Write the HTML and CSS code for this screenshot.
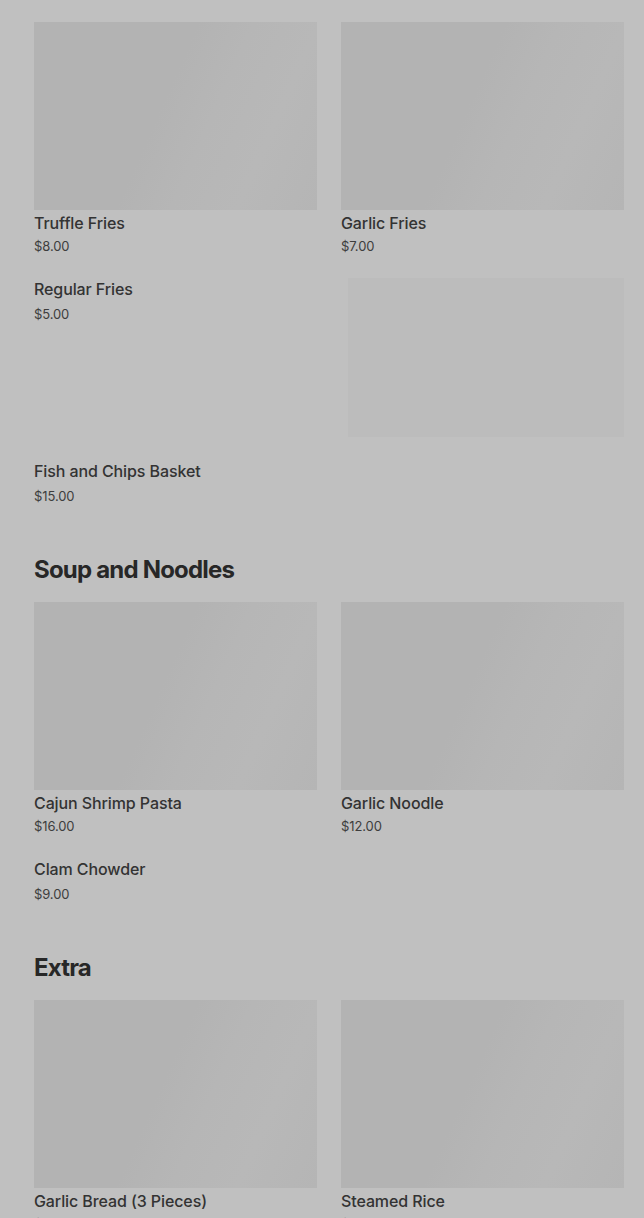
FILE: index.html
```html
<!DOCTYPE html>
<html lang="en">
<head>
<meta charset="utf-8">
<title>Menu</title>
<link rel="stylesheet" href="styles.css">
</head>
<body>
<main class="menu">
  <section class="section first">
    <div class="grid">
      <div class="item">
        <div class="thumb"></div>
        <div class="name">Truffle Fries</div>
        <div class="price">$8.00</div>
      </div>
      <div class="item">
        <div class="thumb"></div>
        <div class="name">Garlic Fries</div>
        <div class="price">$7.00</div>
      </div>
      <div class="item text-only">
        <div class="name">Regular Fries</div>
        <div class="price">$5.00</div>
      </div>
      <div class="item">
        <div class="ghost"></div>
      </div>
      <div class="item text-only">
        <div class="name">Fish and Chips Basket</div>
        <div class="price">$15.00</div>
      </div>
    </div>
  </section>

  <section class="section">
    <h2 class="heading">Soup and Noodles</h2>
    <div class="grid">
      <div class="item">
        <div class="thumb"></div>
        <div class="name">Cajun Shrimp Pasta</div>
        <div class="price">$16.00</div>
      </div>
      <div class="item">
        <div class="thumb"></div>
        <div class="name">Garlic Noodle</div>
        <div class="price">$12.00</div>
      </div>
      <div class="item text-only">
        <div class="name">Clam Chowder</div>
        <div class="price">$9.00</div>
      </div>
    </div>
  </section>

  <section class="section">
    <h2 class="heading">Extra</h2>
    <div class="grid">
      <div class="item">
        <div class="thumb"></div>
        <div class="name">Garlic Bread (3 Pieces)</div>
        <div class="price">$6.00</div>
      </div>
      <div class="item">
        <div class="thumb"></div>
        <div class="name">Steamed Rice</div>
        <div class="price">$3.00</div>
      </div>
    </div>
  </section>
</main>
</body>
</html>
```

FILE: styles.css
```css
html, body {
  margin: 0;
  padding: 0;
  background: #c0c0c0;
  overflow: hidden;
}

body {
  font-family: Inter, "Noto Sans", sans-serif;
  color: #333333;
}

.menu {
  padding: 22px 20px 0 34px;
}

.section + .section {
  margin-top: 48px;
}

.heading {
  margin: 0 0 17px 0;
  padding-top: 1px;
  font-size: 24px;
  line-height: 31px;
  font-weight: 700;
  letter-spacing: -0.8px;
  color: #272727;
}

.grid {
  display: grid;
  grid-template-columns: 1fr 1fr;
  column-gap: 24px;
  row-gap: 23px;
}

.thumb {
  height: 188px;
  background: linear-gradient(114deg, #b3b3b3 0%, #b3b3b3 45%, #b6b6b6 60%, #b8b8b8 78%, #b5b5b5 100%);
}

.ghost {
  margin-left: 7px;
  height: 159px;
  background: #bcbcbc;
}

.name {
  margin-top: 3px;
  font-size: 16px;
  line-height: 20px;
  font-weight: 500;
  letter-spacing: -0.1px;
  color: #333333;
}

.price {
  margin-top: 4px;
  font-size: 13px;
  line-height: 18px;
  font-weight: 400;
  letter-spacing: -0.1px;
  color: #3d3d3d;
}

.text-only .name {
  margin-top: 1px;
}

.text-only .price {
  margin-top: 6px;
}
```
